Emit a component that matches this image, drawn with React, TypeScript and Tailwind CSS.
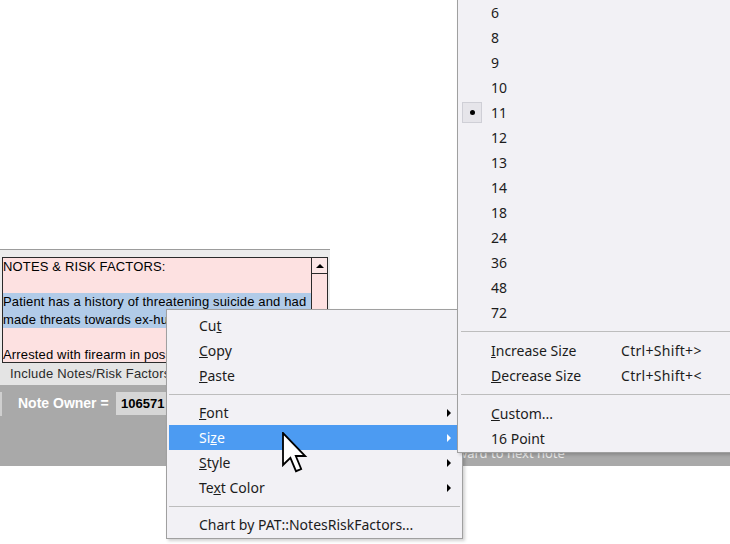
import React from "react";

const sizes = ["6", "8", "9", "10", "11", "12", "13", "14", "18", "24", "36", "48", "72"];

function Arrow({ light }: { light?: boolean }) {
  return (
    <span
      className={
        "ml-auto w-0 h-0 border-y-[4px] border-y-transparent border-l-[4px] " +
        (light ? "border-l-white" : "border-l-black")
      }
    />
  );
}

function CtxItem({
  children,
  arrow,
  active,
}: {
  children: React.ReactNode;
  arrow?: boolean;
  active?: boolean;
}) {
  return (
    <div
      className={
        "mx-[2px] h-[25px] flex items-center pl-[30px] pr-[9px] " +
        (active ? "bg-[#4c9bf2] text-white" : "text-[#1c1c1c]")
      }
    >
      <span>{children}</span>
      {arrow && <Arrow light={active} />}
    </div>
  );
}

function SubItem({
  children,
  checked,
  shortcut,
}: {
  children: React.ReactNode;
  checked?: boolean;
  shortcut?: string;
}) {
  return (
    <div className="h-[25px] flex items-center pl-[4px] text-[#1c1c1c]">
      <div className="w-[20px] h-[21px] flex items-center justify-center">
        {checked && (
          <div className="w-[20px] h-[21px] border border-[#cfcfd6] bg-[#e6e5ea] flex items-center justify-center">
            <div className="w-[5px] h-[5px] rounded-full bg-black" />
          </div>
        )}
      </div>
      <span className="ml-[9px] w-[130px]">{children}</span>
      {shortcut && <span className="tracking-[0.3px]">{shortcut}</span>}
    </div>
  );
}

function Cursor() {
  return (
    <svg width="26" height="42" viewBox="0 0 13 21" className="absolute left-[282px] top-[432px]">
      <polygon
        points="0.5,0.5 0.5,16.5 4.2,12.9 7,19.6 9.6,18.5 6.9,12 11.6,12"
        fill="white"
        stroke="black"
        strokeWidth="0.9"
        strokeLinejoin="miter"
      />
    </svg>
  );
}

export default function App() {
  return (
    <div className="relative w-[730px] h-[544px] overflow-hidden bg-white">
      {/* underlying notes panel */}
      <div className="pt-[249px] font-['Liberation_Sans',Arial,sans-serif]">
        <div className="w-[330px] border-t border-[#9c9c9c] bg-[#ececec] pt-[7px] px-[2px]">
          <div className="h-[106px] border border-[#2a2a2a] bg-[#fde1e1] flex overflow-hidden">
            <div className="flex-1 overflow-hidden text-[13px] tracking-[0.15px] leading-[17.5px] text-black whitespace-nowrap">
              <div>NOTES &amp; RISK FACTORS:</div>
              <div>&nbsp;</div>
              <div className="bg-[#b1cbe8]">
                <div>Patient has a history of threatening suicide and had</div>
                <div>made threats towards ex-husband and his family.</div>
              </div>
              <div>&nbsp;</div>
              <div>Arrested with firearm in possession last year.</div>
            </div>
            <div className="w-[16px] border-l border-[#2a2a2a] flex flex-col">
              <div className="h-[16px] border-b border-[#2a2a2a] flex items-center justify-center bg-[#fbe6e6]">
                <span className="w-0 h-0 border-x-[4px] border-x-transparent border-b-[4px] border-b-black" />
              </div>
            </div>
          </div>
        </div>
        <div className="w-[330px] h-[22px] bg-[#e4e4e4] flex items-center pl-[10px] text-[13px] tracking-[0.2px] text-[#2a2a2a]">
          Include Notes/Risk Factors:
        </div>
        <div className="h-[81px] bg-[#a9a9a9] flex flex-col">
          <div className="mt-[7px] h-[23px] flex items-center">
            <div className="w-[2px] h-[24px] bg-[#cfcfcf]" />
            <span className="ml-[16px] w-[98px] text-[14px] font-bold text-white">Note Owner =</span>
            <div className="w-[60px] h-[23px] bg-[#d6d6d6] flex items-center pl-[5px] text-[13px] font-bold text-black">
              106571
            </div>
          </div>
          <div className="mt-[30px] pl-[437px] h-[17px] leading-[17px] text-[13px] text-[#ececec] font-['Noto_Sans',sans-serif]">
            Forward to next note
          </div>
        </div>
      </div>

      {/* context menu */}
      <div className="absolute left-[166px] top-[309px] w-[297px] border border-[#a0a0a0] bg-[#f2f1f5] pt-[3px] pb-[1px] text-[14px] font-['Noto_Sans',sans-serif] shadow-[2px_2px_3px_rgba(0,0,0,0.18)]">
        <CtxItem>
          Cu<span className="underline">t</span>
        </CtxItem>
        <CtxItem>
          <span className="underline">C</span>opy
        </CtxItem>
        <CtxItem>
          <span className="underline">P</span>aste
        </CtxItem>
        <div className="h-[12px] flex items-center mx-[2px]">
          <div className="w-full h-px bg-[#bdbdbd]" />
        </div>
        <CtxItem arrow>
          <span className="underline">F</span>ont
        </CtxItem>
        <CtxItem arrow active>
          Si<span className="underline">z</span>e
        </CtxItem>
        <CtxItem arrow>
          <span className="underline">S</span>tyle
        </CtxItem>
        <CtxItem arrow>
          Te<span className="underline">x</span>t Color
        </CtxItem>
        <div className="h-[12px] flex items-center mx-[2px]">
          <div className="w-full h-px bg-[#bdbdbd]" />
        </div>
        <CtxItem>Chart by PAT::NotesRiskFactors...</CtxItem>
      </div>

      {/* size submenu */}
      <div className="absolute left-[457px] top-[-5px] w-[300px] border border-[#a0a0a0] bg-[#f2f1f5] pt-[4px] pb-[1px] text-[14px] font-['Noto_Sans',sans-serif] shadow-[2px_2px_3px_rgba(0,0,0,0.18)]">
        {sizes.map((s) => (
          <SubItem key={s} checked={s === "11"}>
            {s}
          </SubItem>
        ))}
        <div className="h-[13px] flex items-center pl-[3px]">
          <div className="w-full h-px bg-[#bdbdbd]" />
        </div>
        <SubItem shortcut="Ctrl+Shift+>">
          <span className="underline">I</span>ncrease Size
        </SubItem>
        <SubItem shortcut="Ctrl+Shift+<">
          <span className="underline">D</span>ecrease Size
        </SubItem>
        <div className="h-[13px] flex items-center pl-[3px]">
          <div className="w-full h-px bg-[#bdbdbd]" />
        </div>
        <SubItem>
          <span className="underline">C</span>ustom...
        </SubItem>
        <SubItem>16 Point</SubItem>
      </div>

      <Cursor />
    </div>
  );
}
